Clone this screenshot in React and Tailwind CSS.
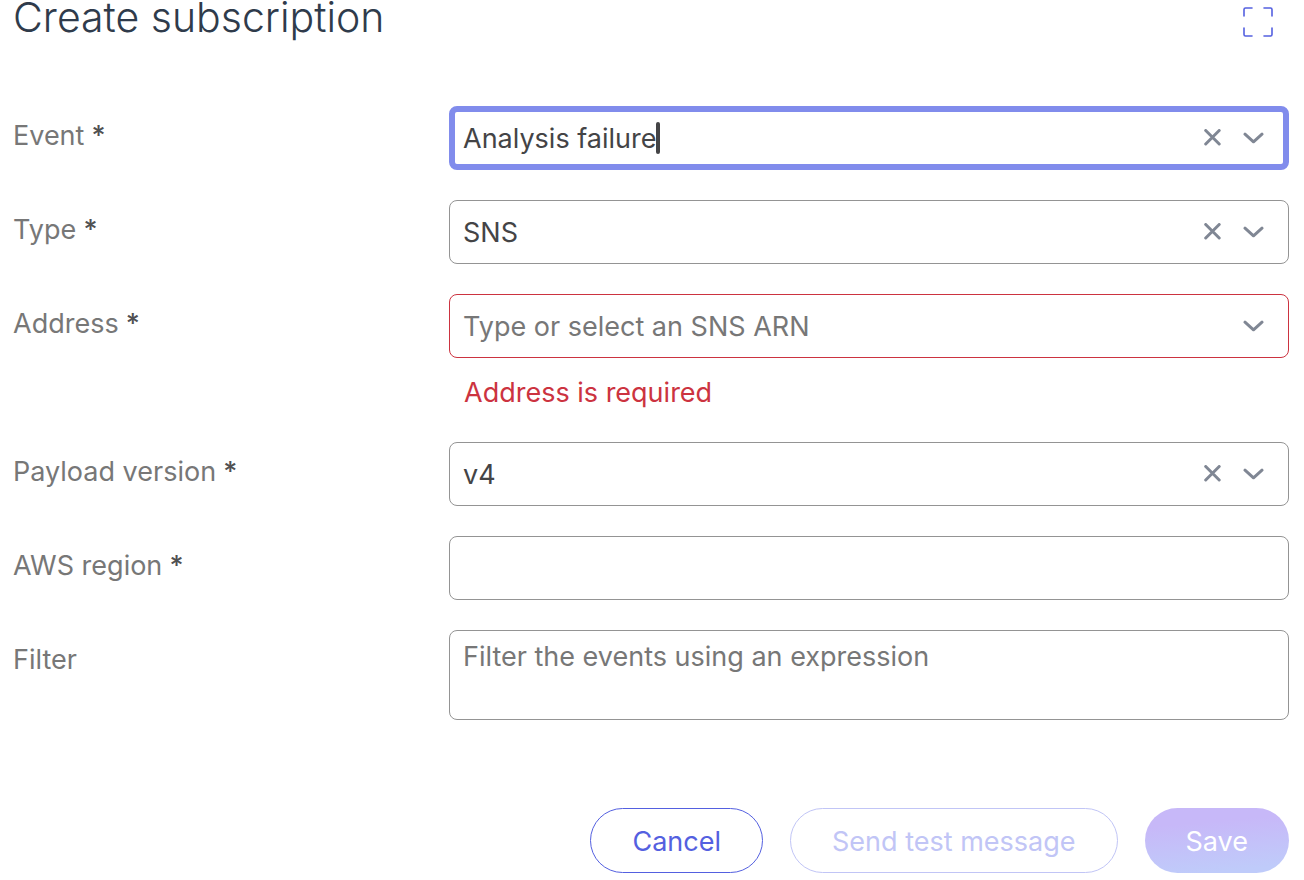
import React, { useState } from 'react';

const ClearIcon = () => (
  <svg width="18" height="18" viewBox="0 0 18 18" fill="none" stroke="currentColor" strokeWidth="3" strokeLinecap="round">
    <path d="M1.7 1.5L15.2 15M15.2 1.5L1.7 15" />
  </svg>
);

const ChevronIcon = () => (
  <svg width="22" height="18" viewBox="0 0 22 18" fill="none" stroke="currentColor" strokeWidth="3" strokeLinecap="round" strokeLinejoin="round">
    <path d="M3 5.2L11.5 12.8L20 5.2" />
  </svg>
);

const ExpandIcon = () => (
  <svg width="30" height="30" viewBox="0 0 30 30" fill="none" stroke="currentColor" strokeWidth="1.6" strokeLinecap="round">
    <path d="M1 9V2.5Q1 1 2.5 1H9M21 1H27.5Q29 1 29 2.5V9M29 21V27.5Q29 29 27.5 29H21M9 29H2.5Q1 29 1 27.5V21" />
  </svg>
);

const FormRow = ({ id, label, required, error, children }) => (
  <div className="grid grid-cols-[436px_minmax(0,1fr)]">
    <label htmlFor={id} className="text-[27px] leading-[60px] text-[#777777]">
      {label}
      {required && <span className="font-medium text-[#505052]"> *</span>}
    </label>
    <div>
      {children}
      {error && (
        <p id={`${id}-error`} className="pt-4 pl-[15px] text-[27px] leading-[38px] text-[#cc3340]">
          {error}
        </p>
      )}
    </div>
  </div>
);

const ComboField = ({ id, value, onChange, placeholder, active, invalid }) => {
  let box = 'border border-[#949494] pl-[13px] pr-6';
  if (invalid) box = 'border border-[#cc3340] pl-[13px] pr-6';
  if (active) box = 'border-6 border-[#818cec] pl-2 pr-[19px]';

  return (
    <div className={`flex h-16 items-center rounded-lg bg-white ${box}`}>
      <div className="flex min-w-0 flex-1 items-center">
        <input
          id={id}
          type="text"
          role="combobox"
          aria-expanded="false"
          aria-invalid={invalid || undefined}
          aria-describedby={invalid ? `${id}-error` : undefined}
          value={value}
          placeholder={placeholder}
          onChange={(e) => onChange(e.target.value)}
          className={`pt-0.5 text-[27px] leading-[40px] text-[#444446] placeholder:text-[#777777] outline-none ${
            active ? 'field-sizing-content caret-transparent' : 'w-full'
          }`}
        />
        {active && <span className="h-8 w-1 shrink-0 rounded-sm bg-[#444446]" />}
      </div>
      <div className="flex shrink-0 items-center gap-5 text-[#808794]">
        {value && (
          <button type="button" aria-label="Clear" onClick={() => onChange('')}>
            <ClearIcon />
          </button>
        )}
        <button type="button" aria-label="Open">
          <ChevronIcon />
        </button>
      </div>
    </div>
  );
};

const App = () => {
  const [event, setEvent] = useState('Analysis failure');
  const [type, setType] = useState('SNS');
  const [address, setAddress] = useState('');
  const [version, setVersion] = useState('v4');
  const [region, setRegion] = useState('');
  const [filter, setFilter] = useState('');

  return (
    <form className="bg-white pr-[15px] pl-[13px] font-['Inter',sans-serif] font-[370]" onSubmit={(e) => e.preventDefault()}>
      {/* Header */}
      <header className="flex h-[106px] items-start justify-between pr-4">
        <h1 className="text-[41px] leading-[34px] font-light text-[#2f3b4b]">Create subscription</h1>
        <button type="button" aria-label="Full screen" className="pt-[7px] text-[#5460e0]">
          <ExpandIcon />
        </button>
      </header>

      {/* Fields */}
      <div className="flex flex-col gap-[30px]">
        <FormRow id="event" label="Event" required>
          <ComboField id="event" value={event} onChange={setEvent} active />
        </FormRow>
        <FormRow id="type" label="Type" required>
          <ComboField id="type" value={type} onChange={setType} />
        </FormRow>
        <FormRow id="address" label="Address" required error={address ? '' : 'Address is required'}>
          <ComboField
            id="address"
            value={address}
            onChange={setAddress}
            placeholder="Type or select an SNS ARN"
            invalid={!address}
          />
        </FormRow>
        <FormRow id="version" label="Payload version" required>
          <ComboField id="version" value={version} onChange={setVersion} />
        </FormRow>
        <FormRow id="region" label="AWS region" required>
          <input
            id="region"
            type="text"
            value={region}
            onChange={(e) => setRegion(e.target.value)}
            className="block h-16 w-full rounded-lg border border-[#949494] px-[13px] text-[27px] text-[#444446] outline-none"
          />
        </FormRow>
        <FormRow id="filter" label="Filter">
          <textarea
            id="filter"
            value={filter}
            onChange={(e) => setFilter(e.target.value)}
            placeholder="Filter the events using an expression"
            className="block h-[90px] w-full resize-none rounded-lg border border-[#949494] px-[13px] py-2 text-[27px] leading-[36px] text-[#444446] outline-none placeholder:text-[#777777]"
          />
        </FormRow>
      </div>

      {/* Actions */}
      <footer className="flex justify-end gap-[27px] pt-[88px] pb-[7px] text-[27px]">
        <button type="button" className="h-[65px] rounded-full border border-[#5460e0] px-[41px] pt-[3px] text-[#5460e0]">
          Cancel
        </button>
        <button type="button" disabled className="h-[65px] rounded-full border border-[#c1c5f6] px-[41px] pt-[3px] text-[#c1c5f6]">
          Send test message
        </button>
        <button type="submit" disabled className="h-[65px] rounded-full bg-linear-175 from-[#c7b8f8] from-25% to-[#bfcbfa] to-90% px-[41px] pt-[3px] text-white">
          Save
        </button>
      </footer>
    </form>
  );
};

export default App;
